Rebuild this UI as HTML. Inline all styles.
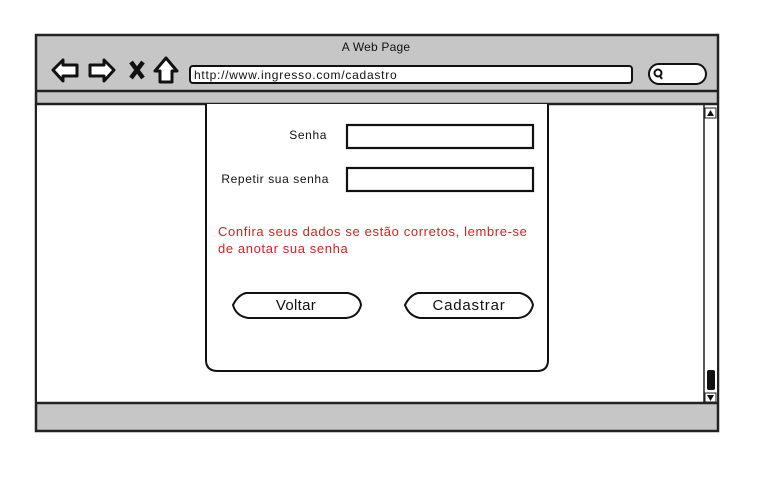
<!DOCTYPE html>
<html><head><meta charset="utf-8"><style>
html,body{margin:0;padding:0;background:#fff;width:772px;height:489px;overflow:hidden}
svg{display:block}
text{font-family:"Liberation Sans",sans-serif}
</style></head><body>
<svg width="772" height="489" viewBox="0 0 772 489">
<rect x="36" y="35" width="682" height="396" fill="#c6c6c6" stroke="#222" stroke-width="2.5"/>
<line x1="36" y1="91" x2="718" y2="91" stroke="#222" stroke-width="2.5"/>
<rect x="37" y="104" width="680" height="299" fill="#fff"/>
<line x1="36" y1="104" x2="718" y2="104" stroke="#222" stroke-width="2.5"/>
<line x1="36" y1="403" x2="718" y2="403" stroke="#222" stroke-width="2.5"/>
<text x="376" y="51" font-size="12" text-anchor="middle" fill="#111" letter-spacing="0.2">A Web Page</text>
<path d="M53 70 L63 60 L63 65 L77 65 L77 76 L63 76 L63 81 Z" fill="#fff" stroke="#111" stroke-width="3" stroke-linejoin="round"/>
<path d="M114 70 L104 60 L104 65 L90 65 L90 76 L104 76 L104 81 Z" fill="#fff" stroke="#111" stroke-width="3" stroke-linejoin="round"/>
<path d="M131 62 L143 78 M143 62 L131 78" stroke="#111" stroke-width="4.5"/>
<path d="M166 58 L177 71 L172 71 L172 82 L160 82 L160 71 L155 71 Z" fill="#fff" stroke="#111" stroke-width="3" stroke-linejoin="round"/>
<rect x="190" y="66" width="442" height="17" rx="3" fill="#fff" stroke="#111" stroke-width="2"/>
<text x="194" y="79" font-size="12" fill="#111" letter-spacing="0.75">http://www.ingresso.com/cadastro</text>
<rect x="649" y="64" width="57" height="20" rx="10" fill="#fff" stroke="#111" stroke-width="2"/>
<circle cx="658" cy="73" r="3.5" fill="none" stroke="#111" stroke-width="2"/>
<line x1="660" y1="76" x2="662" y2="79" stroke="#111" stroke-width="2"/>
<line x1="704" y1="105" x2="704" y2="403" stroke="#222" stroke-width="1.5"/>
<rect x="705" y="108" width="11" height="10" fill="#fff" stroke="#222" stroke-width="1"/>
<path d="M707 116 L710.5 110 L714 116 Z" fill="#111"/>
<rect x="705" y="393" width="11" height="9" fill="#fff" stroke="#222" stroke-width="1"/>
<path d="M707 395 L714 395 L710.5 401 Z" fill="#111"/>
<rect x="707" y="370" width="8" height="20" rx="2" fill="#111"/>
<path d="M206 104 L206 360 Q206 371 218 371 L537 371 Q548 371 548 360 L548 104" fill="#fff" stroke="#111" stroke-width="2"/>
<text x="327" y="139" font-size="12" text-anchor="end" fill="#111" letter-spacing="0.6">Senha</text>
<rect x="347" y="125" width="186" height="23" fill="#fff" stroke="#111" stroke-width="2.2"/>
<text x="329" y="183" font-size="12" text-anchor="end" fill="#111" letter-spacing="0.6">Repetir sua senha</text>
<rect x="347" y="168" width="186" height="23" fill="#fff" stroke="#111" stroke-width="2.2"/>
<text x="218" y="236" font-size="13" fill="#d91f1f" letter-spacing="0.62">Confira seus dados se estão corretos, lembre-se</text>
<text x="218" y="253" font-size="13" fill="#d91f1f" letter-spacing="0.62">de anotar sua senha</text>
<path d="M246 293 L348 293 Q360 296 361 305 Q358 317 346 318 L248 318 Q236 316 233 305 Q238 295 246 293 Z" fill="#fff" stroke="#111" stroke-width="2"/>
<text x="296" y="310" font-size="15" text-anchor="middle" fill="#111" letter-spacing="0.3">Voltar</text>
<path d="M418 293 L520 293 Q531 296 533 305 Q530 317 518 318 L420 318 Q409 316 405 305 Q410 295 418 293 Z" fill="#fff" stroke="#111" stroke-width="2"/>
<text x="469" y="310" font-size="15" text-anchor="middle" fill="#111" letter-spacing="0.8">Cadastrar</text>
</svg>
</body></html>
